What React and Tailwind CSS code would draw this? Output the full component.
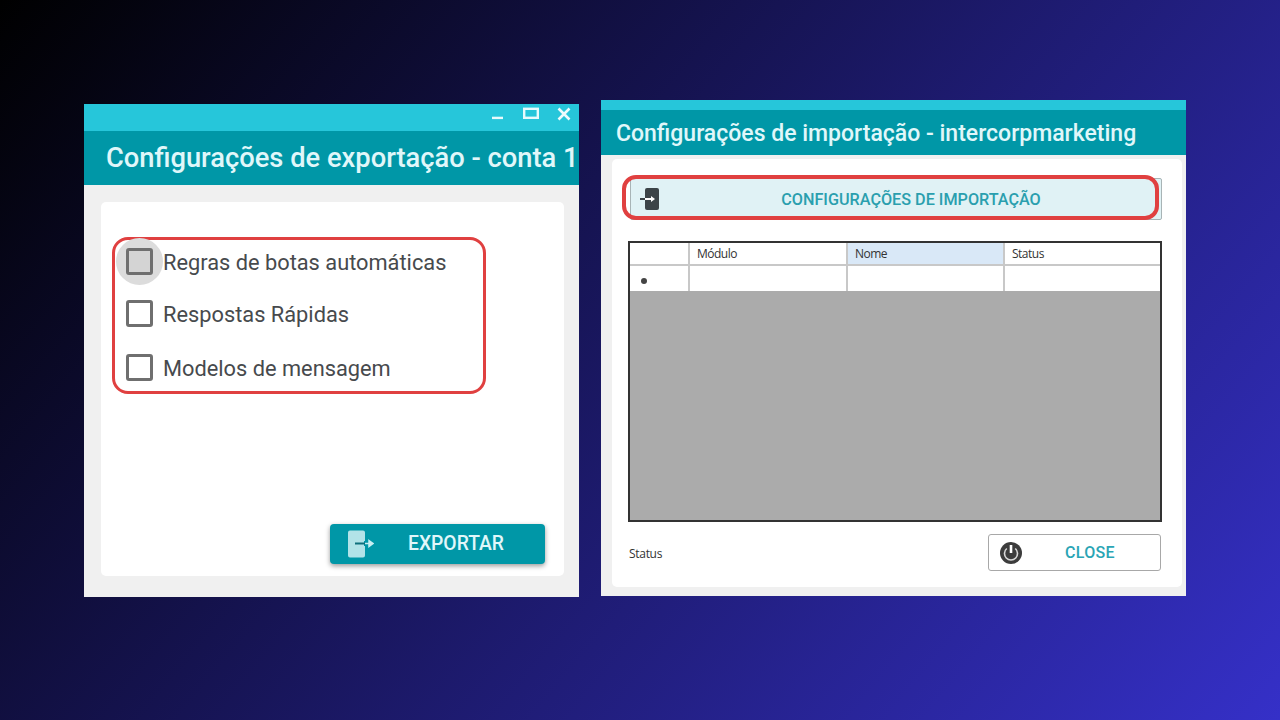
export default function App() {
  const row = "flex items-center h-[42px] pl-[11px] shrink-0";
  const box = "w-[27px] h-[27px] border-[3px] border-[#6f6f6f] rounded-[3px] shrink-0";
  const label = "ml-[10px] mt-[3px] text-[21.8px] leading-none text-[#474a4d] whitespace-nowrap";
  const cell = "border-l-2 border-[#c8c8c8] pl-[7px] flex items-center";
  return (
    <div className="w-[1280px] h-[720px] overflow-hidden flex items-start pl-[84px] pt-[100px] gap-[22px] bg-[linear-gradient(130deg,#000000_0%,#3530c8_100%)] font-['Roboto',sans-serif]">
      <div className="w-[495px] h-[493px] mt-[4px] bg-[#f0f0f0] flex flex-col">
        <div className="h-[27px] bg-[#26c6da] flex items-start justify-end pt-[3px] pr-[7px] gap-[17px] shrink-0">
          <svg width="16" height="16" viewBox="0 0 16 16"><rect x="2" y="9.7" width="11" height="2.4" fill="#e8fafc" /></svg>
          <svg width="16" height="16" viewBox="0 0 16 16"><rect x="1.2" y="1.8" width="13.6" height="9" fill="none" stroke="#e8fafc" strokeWidth="2.4" /></svg>
          <svg width="16" height="16" viewBox="0 0 16 16"><path d="M2.5 1.5 13.5 12.5M13.5 1.5 2.5 12.5" stroke="#eefbfd" strokeWidth="2.6" /></svg>
        </div>
        <div className="h-[54px] bg-[#0097a7] flex items-center pl-[22px] pt-[1px] shrink-0 overflow-hidden">
          <span className="text-[27.3px] font-medium text-[#e0f7fa] whitespace-nowrap">Configurações de exportação - conta 1</span>
        </div>
        <div className="flex-1 pt-[17px] pl-[17px] pr-[15px] pb-[21px] flex">
          <div className="flex-1 bg-white rounded-[5px] pt-[35px] pl-[11px] pr-[78px] pb-[12px] flex flex-col">
            <div className="h-[157px] border-[3px] border-[#e04040] rounded-[16px] flex flex-col">
              <div className={row}>
                <div className="w-[47px] h-[47px] -mx-[10px] rounded-full bg-[#dcdcdc] flex items-center justify-center shrink-0">
                  <div className={box + " bg-[#d4d4d4]"} />
                </div>
                <span className={label}>Regras de botas automáticas</span>
              </div>
              <div className={row + " mt-[10px]"}>
                <div className={box} />
                <span className={label}>Respostas Rápidas</span>
              </div>
              <div className={row + " mt-[12px]"}>
                <div className={box} />
                <span className={label}>Modelos de mensagem</span>
              </div>
            </div>
            <div className="mt-auto self-end -mr-[59px] w-[215px] h-[40px] bg-[#0097a7] rounded-[4px] shadow-[0_2px_5px_rgba(0,0,0,0.4)] flex items-center">
              <svg width="26" height="28" viewBox="0 0 26 28" className="ml-[18px] shrink-0">
                <path d="M2 0.5h13a2 2 0 0 1 2 2v8.5h-1v5h1v9.5a2 2 0 0 1-2 2H2a2 2 0 0 1-2-2V2.5a2 2 0 0 1 2-2z" fill="#b2e3e8" />
                <path d="M7 13.5h10" stroke="#0f6f7c" strokeWidth="2" />
                <path d="M17 13.5h4M21 10.5l4 3-4 3z" stroke="#c8eef2" strokeWidth="1.5" fill="#c8eef2" />
              </svg>
              <span className="ml-[34px] mt-[1px] text-[19.3px] font-medium text-[#e0f7fa]">EXPORTAR</span>
            </div>
          </div>
        </div>
      </div>

      <div className="w-[585px] h-[496px] bg-[#f0f0f0] flex flex-col">
        <div className="h-[10px] bg-[#26c6da] shrink-0" />
        <div className="h-[45px] bg-[#0097a7] flex items-center pl-[15px] pt-[4px] shrink-0">
          <span className="text-[23px] font-medium text-[#e0f7fa] whitespace-nowrap">Configurações de importação - intercorpmarketing</span>
        </div>
        <div className="flex-1 pt-[4px] pl-[11px] pr-[4px] pb-[9px] flex">
          <div className="flex-1 bg-white rounded-[5px] pt-[19px] pl-[16px] pr-[20px] flex flex-col">
            <div className="relative h-[42px] ml-[2px] bg-[#e0f2f5] border border-[#a8b4b6] rounded-[2px] flex items-center justify-center">
              <svg width="22" height="24" viewBox="0 0 22 24" className="absolute left-[8px] top-[8px]">
                <rect x="6" y="1" width="14" height="22" rx="2" fill="#3c4448" />
                <path d="M1 12h5" stroke="#3c4448" strokeWidth="2" />
                <path d="M6 12h7" stroke="#ffffff" strokeWidth="2" />
                <path d="M12 9l4 3-4 3z" fill="#ffffff" />
              </svg>
              <span className="ml-[30px] pt-[2px] text-[16.2px] font-medium text-[#2a9fae]">CONFIGURAÇÕES DE IMPORTAÇÃO</span>
              <div className="absolute -left-[9px] -top-[4px] w-[537px] h-[45px] border-[4px] border-[#e04040] rounded-[14px]" />
            </div>
            <div className="mt-[21px] h-[281px] border-2 border-[#333333] bg-[#ababab] flex flex-col font-['Open_Sans',sans-serif] text-[12px] tracking-[-0.5px] text-[#333333]">
              <div className="h-[23px] bg-white border-b-2 border-[#c8c8c8] grid grid-cols-[58px_158px_157px_157px]">
                <div />
                <div className={cell}>Módulo</div>
                <div className={cell + " bg-[#d9e8f7]"}>Nome</div>
                <div className={cell}>Status</div>
              </div>
              <div className="h-[25px] bg-white grid grid-cols-[58px_158px_157px_157px]">
                <div className="flex items-center pl-[11px] pt-[4px]"><div className="w-[6px] h-[6px] rounded-full bg-[#444444]" /></div>
                <div className={cell} />
                <div className={cell} />
                <div className={cell} />
              </div>
            </div>
            <div className="mt-[12px] flex items-center justify-between">
              <span className="ml-[1px] mt-[3px] font-['Open_Sans',sans-serif] text-[12px] tracking-[-0.3px] text-[#333333]">Status</span>
              <div className="mr-[1px] w-[173px] h-[37px] border border-[#a8a8a8] rounded-[3px] bg-white flex items-center">
                <svg width="24" height="24" viewBox="0 0 24 24" className="ml-[10px] shrink-0">
                  <circle cx="12" cy="12" r="11" fill="#3c3c3c" />
                  <path d="M7.8 7.5a6.5 6.5 0 1 0 8.4 0" fill="none" stroke="#d8d8d8" strokeWidth="1.6" />
                  <path d="M12 4v8" stroke="#ffffff" strokeWidth="2.6" />
                </svg>
                <span className="ml-[42px] mt-[1px] text-[16px] font-medium text-[#2aa5b5] tracking-[0.3px]">CLOSE</span>
              </div>
            </div>
          </div>
        </div>
      </div>
    </div>
  );
}
